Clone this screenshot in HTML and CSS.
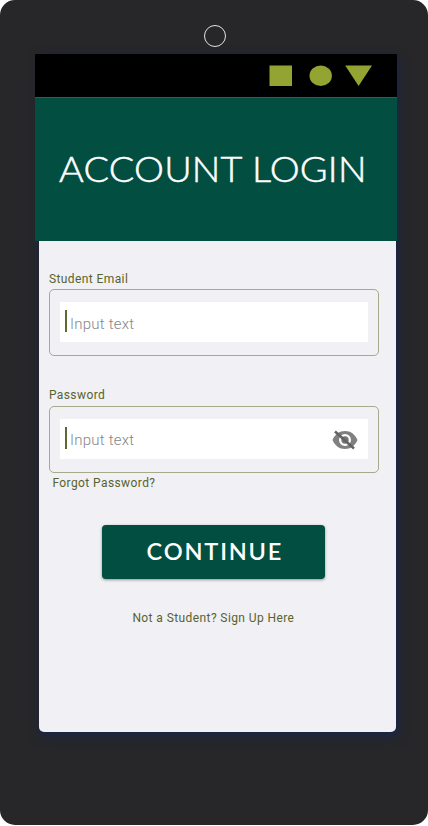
FILE: index.html
```html
<!DOCTYPE html>
<html lang="en">
<head>
<meta charset="utf-8">
<title>Account Login</title>
<link rel="stylesheet" href="styles.css">
</head>
<body>
<div class="phone">
  <div class="camera"></div>
  <div class="screen">
    <div class="status-bar">
      <svg width="104" height="22" viewBox="0 0 104 22" fill="#93a432"><path d="M.5.5h22.5v20.5H.5z"/><ellipse cx="51.7" cy="10.8" rx="11.2" ry="10.3"/><path d="M76.2.5H103L89.6 21z"/></svg>
    </div>
    <header class="banner"><h1 class="title"><span class="word">ACCOUNT</span><span class="word word-second">LOGIN</span></h1></header>
    <main class="content">
      <label class="label">Student Email</label>
      <div class="field">
        <div class="input"><span class="caret"></span><span class="placeholder">Input text</span></div>
      </div>
      <label class="label label-password">Password</label>
      <div class="field field-password">
        <div class="input"><span class="caret"></span><span class="placeholder">Input text</span>
          <svg class="eye" width="26" height="20" viewBox="0 0 26 20"><path fill="#808080" fill-rule="evenodd" d="M.5 10C2.8 4.3 7.5 1 13 1s10.200 3.300 12.500 9C23.200 15.700 18.500 19 13 19S2.800 15.700.5 10zM13 4a6 6 0 1 0 0 12 6 6 0 0 0 0-12z"/><circle cx="13" cy="10" r="3.700" fill="#757575"/><path d="M3 1.500 22 18.500" stroke="#626262" stroke-width="2.500"/></svg>
        </div>
      </div>
      <a class="forgot">Forgot Password?</a>
      <button class="continue"><span class="continue-text">CONTINUE</span></button>
      <a class="signup">Not a Student? Sign Up Here</a>
    </main>
  </div>
</div>
</body>
</html>
```
FILE: styles.css
```css
* { box-sizing: border-box; }
body { margin: 0; background: #fff; font-family: Roboto, sans-serif; }
.phone {
  width: 428px;
  height: 825.4px;
  border-radius: 15px;
  background: #272729;
  display: flex;
  flex-direction: column;
}
.camera {
  width: 22.5px;
  height: 22.5px;
  margin: 24.5px 0 7.3px 203.5px;
  border: 1px solid #e4e4e8;
  border-radius: 50%;
  flex: none;
}
.screen {
  width: 356.5px;
  height: 678px;
  margin-left: 39.4px;
  background: #f1f0f5;
  border-radius: 0 0 5px 5px;
  box-shadow: 2px 4px 12px #1b2547, 1px 1px 3px #1b2547;
}
.status-bar {
  height: 43px;
  width: 362.6px;
  margin-left: -4.9px;
  padding: 11px 24px 0 0;
  background: #000;
  display: flex;
  justify-content: flex-end;
}
.banner {
  height: 143.7px;
  width: 362.6px;
  margin-left: -4.9px;
  padding: 48px 0 0 24.5px;
  background: #024f42;
  border-top: 1px solid #266356;
}
.title {
  margin: 0;
  display: flex;
  color: #fff;
  font: 300 35px/44px Lato, sans-serif;
  -webkit-text-stroke: .5px #fff;
}
.word {
  flex: none;
  width: 192.500px;
  letter-spacing: .2px;
  transform: scaleX(1.08);
  transform-origin: left;
}
.word-second { width: 120px; }
.content {
  padding: 30px 17px 0 9.5px;
  display: flex;
  flex-direction: column;
  color: #58632b;
}
.label, .forgot, .signup {
  font-size: 12px;
  line-height: 16px;
  letter-spacing: .41px;
  white-space: nowrap;
}
.field {
  height: 67px;
  width: 330px;
  margin-top: 2px;
  padding: 12px 10px;
  border: 1px solid #a5aa8b;
  border-radius: 5px;
}
.label-password { margin-top: 31px; }
.field-password { margin-top: 3px; }
.input {
  height: 40px;
  width: 308px;
  padding-left: 5px;
  background: #fff;
  display: flex;
  align-items: center;
}
.caret { width: 2px; height: 22px; margin-bottom: 2px; background: #5c6a31; }
.placeholder {
  margin: 3px 0 0 3px;
  font-size: 15px;
  font-weight: 300;
  letter-spacing: .25px;
  color: #858585;
}
.field:not(.field-password) .placeholder { margin-top: 4px; }
.eye { margin: 3px 10px 0 auto; }
.forgot { margin: 2px 0 0 3.5px; }
.continue {
  width: 223px;
  height: 54px;
  margin: 34px 0 0 53.4px;
  padding: 0 0 0 3px;
  border: 0;
  border-radius: 4px;
  background: #024f42;
  box-shadow: 0 1px 3px #0006;
  color: #fff;
  font: 600 22px/52px Lato, sans-serif;
}
.continue-text { display: inline-block; letter-spacing: 1.7px; transform: scaleX(1.07); }
.signup { margin: 31px 0 0 83.5px; }
```
